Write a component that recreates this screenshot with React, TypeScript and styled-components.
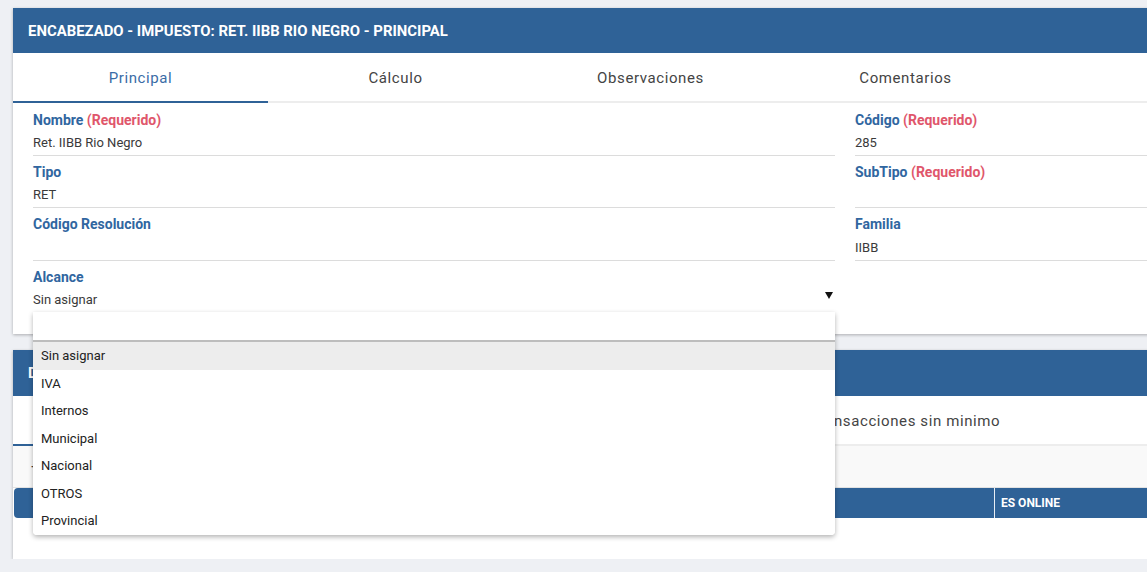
import React from "react";
import styled, { createGlobalStyle } from "styled-components";

const Global = createGlobalStyle`
  html, body { margin: 0; padding: 0; overflow: hidden; }
  body { background: #eef0f4; font-family: Roboto, "Liberation Sans", Arial, sans-serif; }
  * { box-sizing: border-box; }
`;

const BLUE = "#2f6297";
const LABEL = "#3066a0";
const RED = "#e0566b";

const Page = styled.div`
  width: 1180px;
  padding: 8px 0 0 13px;
  display: flex;
  flex-direction: column;
  gap: 16px;
`;

const Card = styled.section`
  width: 1160px;
  background: #fff;
  box-shadow: 0 1px 3px rgba(0, 0, 0, 0.28);
  position: relative;
`;

const Header = styled.div<{ $h?: number }>`
  height: ${(p) => p.$h ?? 45}px;
  background: ${BLUE};
  color: #fff;
  font-weight: 700;
  font-size: 14.9px;
  display: flex;
  align-items: center;
  padding-left: 15px;
`;

const Tabs = styled.div`
  display: flex;
  border-bottom: 2px solid #ededed;
  height: 50px;
`;

const Tab = styled.div<{ $active?: boolean }>`
  flex: 0 0 255px;
  display: flex;
  align-items: center;
  justify-content: center;
  font-size: 15px;
  letter-spacing: 0.6px;
  color: ${(p) => (p.$active ? "#3a6ca6" : "#444")};
  border-bottom: 2px solid ${(p) => (p.$active ? BLUE : "transparent")};
  margin-bottom: -2px;
  padding-top: 2px;
`;

const Form = styled.div`
  display: grid;
  grid-template-columns: 802px 1fr;
  column-gap: 20px;
  padding: 1px 20px 21px 20px;
  align-items: start;
`;

const Column = styled.div`
  display: flex;
  flex-direction: column;
`;

const Field = styled.div<{ $dark?: boolean }>`
  position: relative;
  padding: 7px 0 4px;
  border-bottom: 1px solid ${(p) => (p.$dark ? "#9a9a9a" : "#dcdcdc")};
`;

const Label = styled.div`
  font-size: 14px;
  font-weight: 700;
  line-height: 18px;
  color: ${LABEL};
`;

const Req = styled.span`
  color: ${RED};
`;

const ValueRow = styled.div<{ $tall?: boolean }>`
  margin-top: 6px;
  height: ${(p) => (p.$tall ? 17 : 16)}px;
  line-height: 16px;
  display: flex;
  align-items: center;
  justify-content: space-between;
  font-size: 13px;
  color: #3a3a3a;
`;

const Caret = styled.span`
  width: 0;
  height: 0;
  border-left: 4px solid transparent;
  border-right: 4px solid transparent;
  border-top: 7px solid #111;
  margin: 0 2px 10px 0;
`;

const Dropdown = styled.div`
  position: absolute;
  top: 100%;
  left: 0;
  width: 100%;
  background: #fff;
  border-radius: 0 0 4px 4px;
  box-shadow: 0 2px 5px rgba(0, 0, 0, 0.3);
  z-index: 10;
  overflow: hidden;
`;

const SearchBox = styled.div`
  height: 30px;
  border-bottom: 2px solid #bdbdbd;
`;

const Option = styled.div<{ $hl?: boolean }>`
  height: 27.5px;
  display: flex;
  align-items: center;
  padding-left: 8px;
  font-size: 13px;
  color: #222;
  background: ${(p) => (p.$hl ? "#ededed" : "#fff")};
`;

const Toolbar = styled.div`
  height: 42px;
  background: #f9f9f9;
  border-bottom: 1px solid #e2e2e2;
  display: flex;
  align-items: center;
  padding-left: 18px;
  color: #444;
  font-size: 14px;
`;

const TableHead = styled.div`
  margin-left: 1px;
  height: 30px;
  background: ${BLUE};
  border-radius: 4px 0 0 4px;
  display: grid;
  grid-template-columns: 320px 340px 320px 1fr;
`;

const Th = styled.div<{ $sep?: boolean; $pad?: number }>`
  display: flex;
  align-items: center;
  padding-left: ${(p) => p.$pad ?? 6}px;
  color: #fff;
  font-size: 12px;
  font-weight: 700;
  border-left: ${(p) => (p.$sep ? "1px solid #e8eef5" : "none")};
`;

const TableBody = styled.div`
  height: 41px;
`;

const options = ["Sin asignar", "IVA", "Internos", "Municipal", "Nacional", "OTROS", "Provincial"];

export default function App() {
  return (
    <>
      <Global />
      <Page>
        <Card>
          <Header>ENCABEZADO - IMPUESTO: RET. IIBB RIO NEGRO - PRINCIPAL</Header>
          <Tabs>
            <Tab $active>Principal</Tab>
            <Tab>Cálculo</Tab>
            <Tab>Observaciones</Tab>
            <Tab>Comentarios</Tab>
          </Tabs>
          <Form>
            <Column>
              <Field>
                <Label>
                  Nombre <Req>(Requerido)</Req>
                </Label>
                <ValueRow>Ret. IIBB Rio Negro</ValueRow>
              </Field>
              <Field>
                <Label>Tipo</Label>
                <ValueRow>RET</ValueRow>
              </Field>
              <Field>
                <Label>Código Resolución</Label>
                <ValueRow $tall />
              </Field>
              <Field $dark>
                <Label>Alcance</Label>
                <ValueRow>
                  <span>Sin asignar</span>
                  <Caret />
                </ValueRow>
                <Dropdown>
                  <SearchBox />
                  {options.map((o, i) => (
                    <Option key={o} $hl={i === 0}>
                      {o}
                    </Option>
                  ))}
                </Dropdown>
              </Field>
            </Column>
            <Column>
              <Field>
                <Label>
                  Código <Req>(Requerido)</Req>
                </Label>
                <ValueRow>285</ValueRow>
              </Field>
              <Field>
                <Label>
                  SubTipo <Req>(Requerido)</Req>
                </Label>
                <ValueRow />
              </Field>
              <Field>
                <Label>Familia</Label>
                <ValueRow $tall>IIBB</ValueRow>
              </Field>
            </Column>
          </Form>
        </Card>
        <Card>
          <Header $h={46}>DETALLE - IMPUESTO: RET. IIBB RIO NEGRO</Header>
          <Tabs>
            <Tab $active>Detalle</Tab>
            <Tab>Alícuotas</Tab>
            <Tab>Mínimos</Tab>
            <Tab>Transacciones sin minimo</Tab>
          </Tabs>
          <Toolbar>+</Toolbar>
          <TableHead>
            <Th $pad={28}>DESCRIPCIÓN</Th>
            <Th $sep>VALOR</Th>
            <Th $sep>TIPO</Th>
            <Th $sep>ES ONLINE</Th>
          </TableHead>
          <TableBody />
        </Card>
      </Page>
    </>
  );
}
